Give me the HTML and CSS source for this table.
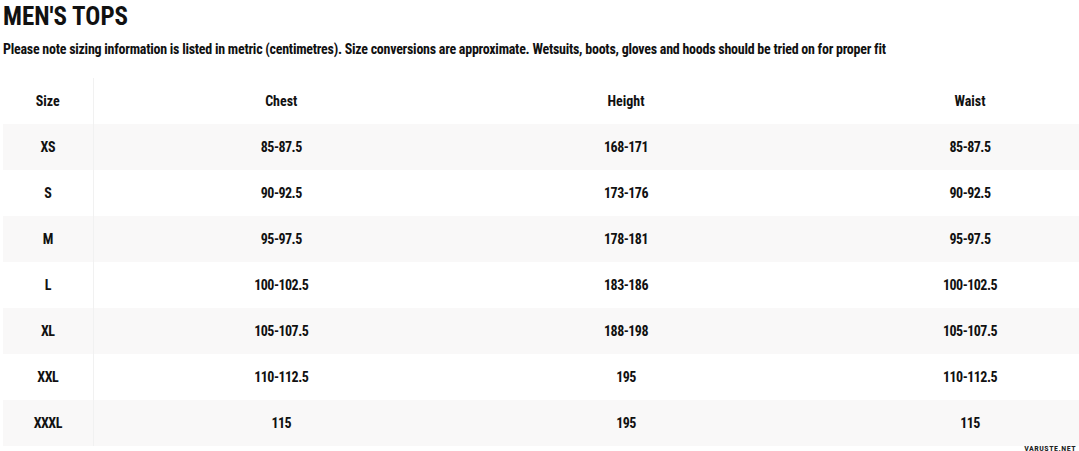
FILE: index.html
```html
<!DOCTYPE html>
<html>
<head>
<meta charset="utf-8">
<link rel="stylesheet" href="styles.css">
</head>
<body>
<div class="page">
  <h1 class="title">MEN'S TOPS</h1>
  <p class="note">Please note sizing information is listed in metric (centimetres). Size conversions are approximate. Wetsuits, boots, gloves and hoods should be tried on for proper fit</p>
  <div class="table-wrap">
    <table class="sizes">
      <colgroup>
        <col class="c-size"><col class="c-chest"><col class="c-height"><col class="c-waist">
      </colgroup>
      <thead>
        <tr><th>Size</th><th>Chest</th><th>Height</th><th>Waist</th></tr>
      </thead>
      <tbody>
        <tr><td>XS</td><td>85-87.5</td><td>168-171</td><td>85-87.5</td></tr>
        <tr><td>S</td><td>90-92.5</td><td>173-176</td><td>90-92.5</td></tr>
        <tr><td>M</td><td>95-97.5</td><td>178-181</td><td>95-97.5</td></tr>
        <tr><td>L</td><td>100-102.5</td><td>183-186</td><td>100-102.5</td></tr>
        <tr><td>XL</td><td>105-107.5</td><td>188-198</td><td>105-107.5</td></tr>
        <tr><td>XXL</td><td>110-112.5</td><td>195</td><td>110-112.5</td></tr>
        <tr><td>XXXL</td><td>115</td><td>195</td><td>115</td></tr>
      </tbody>
    </table>
  </div>
</div>
<div class="watermark">VARUSTE.NET</div>
</body>
</html>
```
FILE: styles.css
```css
html, body {
  margin: 0;
  padding: 0;
  background: #fff;
  overflow: hidden;
}
body {
  font-family: "Roboto Condensed", "Roboto", sans-serif;
  color: #111;
  width: 1079px;
  height: 451px;
  position: relative;
}
.page {
  padding: 0 0 0 3px;
}
.title {
  margin: 0;
  padding-top: 2px;
  font-size: 25px;
  line-height: 30px;
  font-weight: 700;
}
.note {
  margin: 8px 0 0 0;
  font-size: 14px;
  line-height: 18px;
  font-weight: 700;
  letter-spacing: -0.25px;
}
.table-wrap {
  margin-top: 20px;
  width: 1076px;
  overflow: hidden;
}
.sizes {
  border-collapse: collapse;
  table-layout: fixed;
  width: 1154px;
}
.c-size { width: 90px; }
.c-chest { width: 376px; }
.c-height { width: 314px; }
.c-waist { width: 374px; }
.sizes th, .sizes td {
  height: 46px;
  padding: 0;
  text-align: center;
  font-size: 14px;
  font-weight: 700;
}
.sizes td {
  letter-spacing: -0.5px;
}
.sizes th:first-child, .sizes td:first-child {
  border-right: 1px solid #f1f1f1;
}
.sizes tbody tr:nth-child(odd) {
  background: #f9f8f8;
}
.watermark {
  position: absolute;
  right: 3px;
  bottom: -2px;
  font-size: 8px;
  font-weight: 700;
  letter-spacing: 0.5px;
  color: #222;
}
```
